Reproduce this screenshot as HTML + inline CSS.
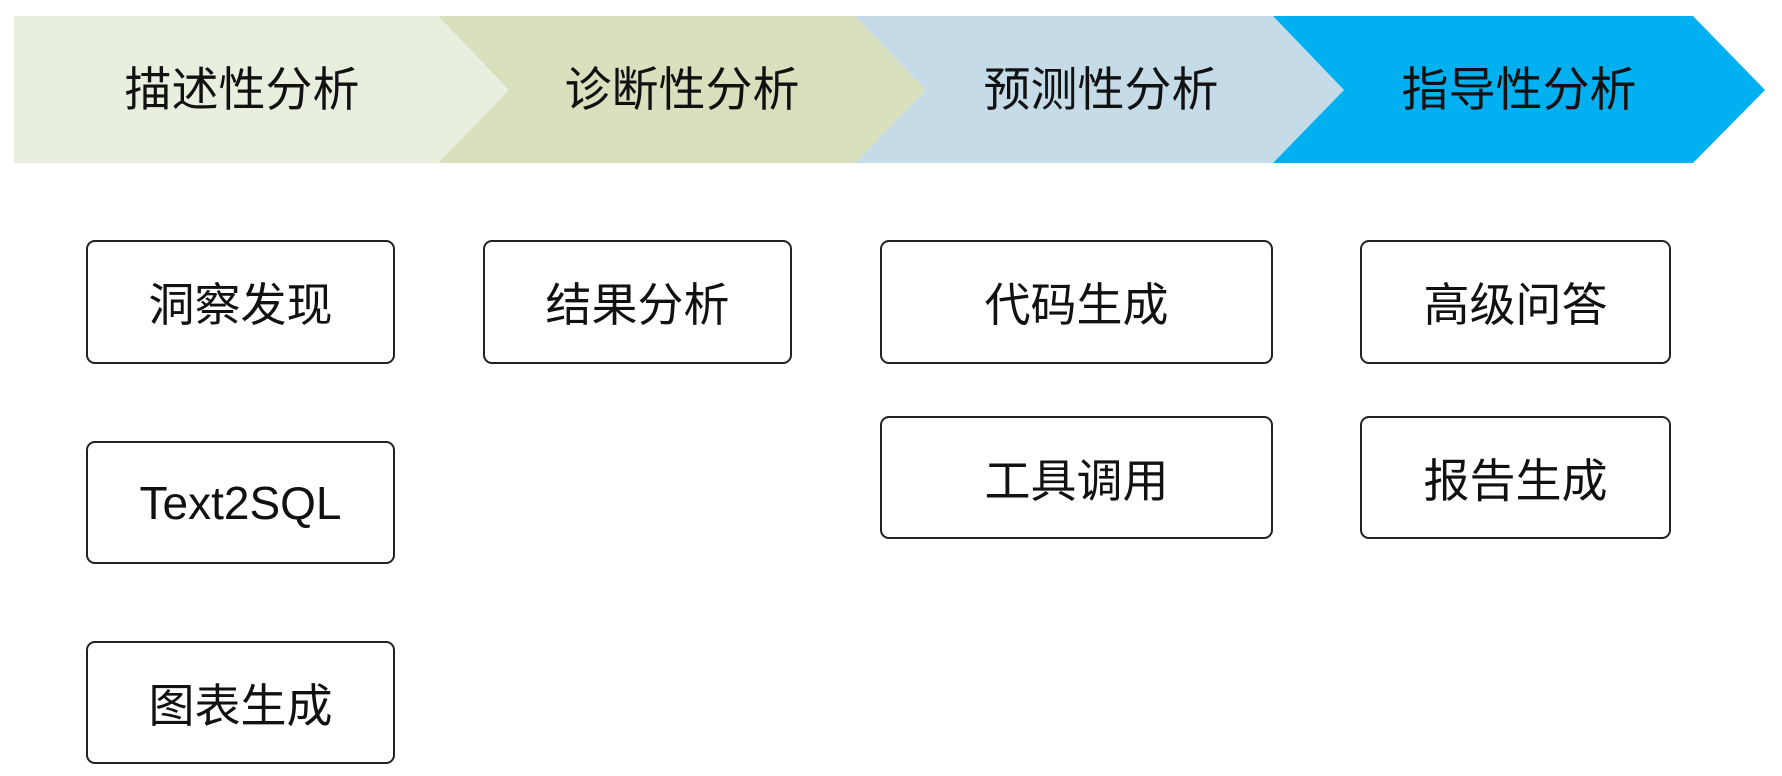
<!DOCTYPE html>
<html><head><meta charset="utf-8"><style>
body{margin:0;width:1782px;height:776px;background:#fff;position:relative;overflow:hidden;font-family:"Liberation Sans","Noto Sans CJK SC",sans-serif;}
svg{position:absolute;left:0;top:0}
.t{position:absolute;top:62px;font-size:47px;color:#111;transform:translateX(-50%);white-space:nowrap;line-height:56px}
.b{position:absolute;box-sizing:border-box;border:2px solid #222;border-radius:9px;display:flex;align-items:center;justify-content:center;font-size:46px;color:#111}
</style></head><body>
<svg width="1782" height="776">
<polygon points="14,16 438,16 509,90 438,163 14,163" fill="#e9efdf"/>
<polygon points="438,16 855,16 926,90 855,163 438,163 509,90" fill="#d9e0bd"/>
<polygon points="855,16 1273,16 1344,90 1273,163 855,163 926,90" fill="#c5dbe7"/>
<polygon points="1273,16 1693,16 1765,90 1693,163 1273,163 1344,90" fill="#00b0f0"/>
</svg>
<div class="t" style="left:242px">描述性分析</div>
<div class="t" style="left:682px">诊断性分析</div>
<div class="t" style="left:1101px">预测性分析</div>
<div class="t" style="left:1519px">指导性分析</div>
<div class="b" style="left:86px;top:240px;width:309px;height:124px">洞察发现</div>
<div class="b" style="left:86px;top:441px;width:309px;height:123px">Text2SQL</div>
<div class="b" style="left:86px;top:641px;width:309px;height:123px">图表生成</div>
<div class="b" style="left:483px;top:240px;width:309px;height:124px">结果分析</div>
<div class="b" style="left:880px;top:240px;width:393px;height:124px">代码生成</div>
<div class="b" style="left:880px;top:416px;width:393px;height:123px">工具调用</div>
<div class="b" style="left:1360px;top:240px;width:311px;height:124px">高级问答</div>
<div class="b" style="left:1360px;top:416px;width:311px;height:123px">报告生成</div>
</body></html>
